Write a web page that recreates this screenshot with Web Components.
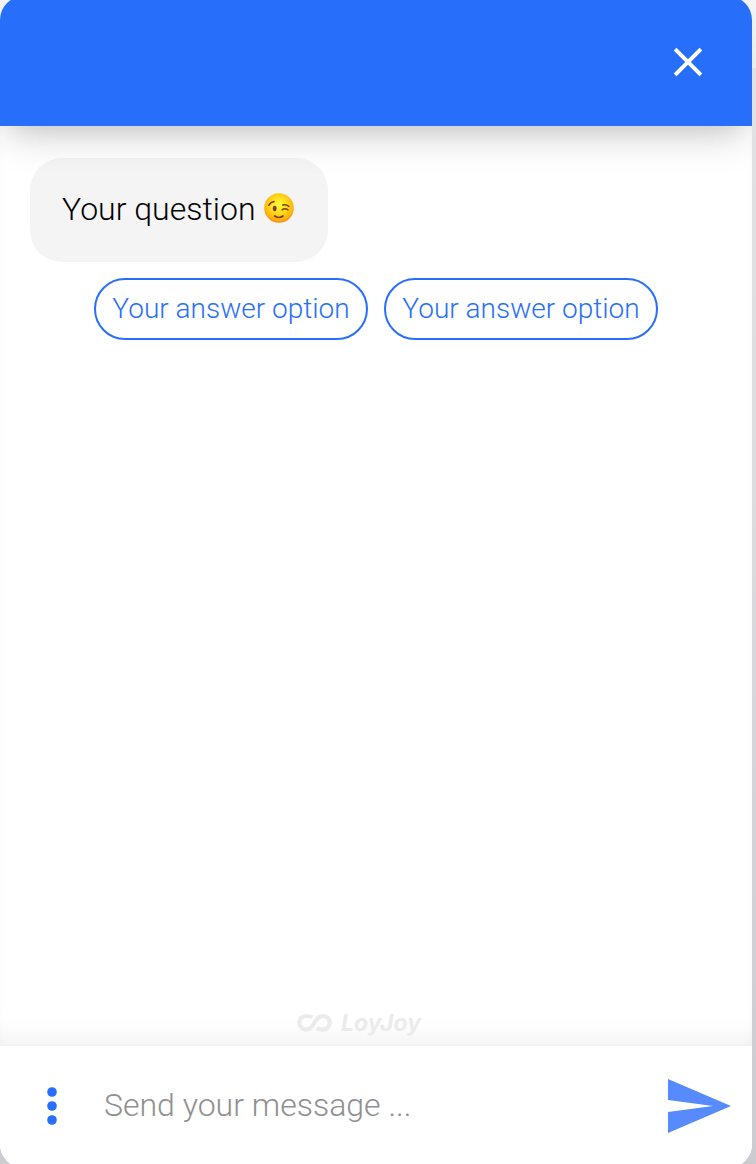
<!DOCTYPE html>
<html lang="en"><head><meta charset="utf-8"><title>Chat</title>
<style>html,body{margin:0;height:100%;overflow:hidden}body{background:linear-gradient(#f4f4f5 0,#ececed 68px,#e2e2e4 68px,#dddde0 40%,#cbcbd0 100%);font-family:Roboto,sans-serif;font-weight:300}</style></head>
<body>
<chat-window>
<chat-header slot="header"></chat-header>
<chat-bubble>Your question</chat-bubble>
<chat-options><chat-option>Your answer option</chat-option><chat-option>Your answer option</chat-option></chat-options>
<chat-brand slot="brand"></chat-brand>
<chat-composer slot="footer">Send your message ...</chat-composer>
</chat-window>
<script>
const define=(name,html)=>customElements.define(name,class extends HTMLElement{
constructor(){super();this.attachShadow({mode:'open'}).innerHTML=html}});

define('chat-window',`<style>
:host{display:flex;flex-direction:column;box-sizing:border-box;width:752px;height:1172px;margin-top:-4px;border-radius:24px;overflow:hidden;background:#fff}
main{flex:1;display:flex;flex-direction:column;padding:32px 30px 0;box-shadow:inset 10px 0 10px -10px rgba(0,0,0,.02),inset -10px 0 10px -10px rgba(0,0,0,.03),inset 0 -26px 26px -20px rgba(0,0,0,.07)}
.grow{flex:1}
</style><slot name="header"></slot><main><slot></slot><div class="grow"></div><slot name="brand"></slot></main><slot name="footer"></slot>`);

define('chat-header',`<style>
:host{display:flex;align-items:center;justify-content:flex-end;box-sizing:border-box;height:130px;padding:2px 48px 0 0;background:#276ffb;position:relative;z-index:1;box-shadow:0 16px 38px -8px rgba(0,0,0,.21),0 8px 24px -10px rgba(0,0,0,.08)}
svg{display:block}
</style><svg width="32" height="32" viewBox="0 0 32 32" fill="none" stroke="#fff" stroke-width="4"><path d="M3.100 3.100l25.800 25.800M28.900 3.100l-25.800 25.800"/></svg>`);

define('chat-bubble',`<style>
:host{display:flex;align-items:center;align-self:flex-start;box-sizing:border-box;width:298px;height:104px;padding:0 32px 4px;border-radius:32px;background:#f4f4f4;color:#000;font-size:32px;white-space:nowrap}
span{padding-top:2px}
svg{margin-left:9px;flex:none}
</style><span><slot></slot></span>
<svg width="30" height="30" viewBox="0 0 30 30" role="img" aria-label="winking face"><defs><radialGradient id="f" cx=".5" cy=".4" r=".62"><stop offset="0" stop-color="#fff83c"/><stop offset=".45" stop-color="#ffdc1c"/><stop offset=".8" stop-color="#ffb20c"/><stop offset="1" stop-color="#ee8216"/></radialGradient></defs>
<circle cx="15" cy="15" r="14.8" fill="url(#f)"/><ellipse cx="10.700" cy="15.500" rx="1.9" ry="2.8" fill="#794108"/><g fill="none" stroke="#794108" stroke-linecap="round"><path d="M4.800 12.300q2-3.500 5.300-3.800" stroke-width="1.500"/><path d="M18.800 12q3.500-1 6 1.400M18 16.800q3-2 6 .1" stroke-width="1.500"/><path d="M10.700 23q4.300 3 8.300 0" stroke-width="1.700"/></g></svg>`);

define('chat-options',`<style>:host{display:flex;justify-content:center;gap:16px;margin-top:16px}</style><slot></slot>`);

define('chat-option',`<style>
:host{display:flex;align-items:center;justify-content:center;box-sizing:border-box;width:274px;height:62px;padding-bottom:2px;border:2px solid #276ffb;border-radius:31px;background:#fff;color:#276ffb;font-size:28px;white-space:nowrap}
</style><span><slot></slot></span>`);

define('chat-brand',`<style>
:host{display:flex;align-items:center;height:30px;margin:0 0 8px 267px;color:#ebebeb}
span{font:italic 700 23px/30px Inter,sans-serif;margin-left:9px;letter-spacing:0}
</style><svg width="35" height="20" viewBox="0 0 35 20" fill="none" stroke="currentColor" stroke-width="4.200"><path d="M15.500 4.300C13.500 3 12 3 9 3a6.800 6.800 0 0 0 0 13.600C18 16.600 17 3 26 3a6.800 6.800 0 0 1 0 13.600c-3 0-4.500 0-6.500-1.300"/></svg><span>LoyJoy</span>`);

define('chat-composer',`<style>
:host{display:flex;align-items:center;box-sizing:border-box;height:122px;padding:0 21px 2px 47px;background:#fff;color:#8f8f8f;font-size:32px}
span{margin-left:47px;flex:1;white-space:nowrap;padding-bottom:2px}
svg{flex:none}
</style><svg width="10" height="38" viewBox="0 0 10 38" fill="#276ffb"><circle cx="5" cy="5" r="4.800"/><circle cx="5" cy="19" r="4.800"/><circle cx="5" cy="33" r="4.800"/></svg>
<span><slot></slot></span>
<svg width="63" height="54" viewBox="0 0 63 54" fill="#578afc"><path d="M0 0l63 27L0 54V33l45-6L0 21z"/></svg>`);
</script></body></html>
